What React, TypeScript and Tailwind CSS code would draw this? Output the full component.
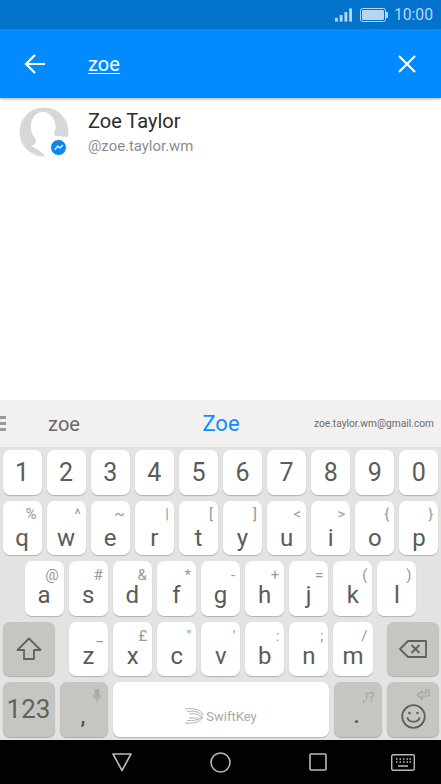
import React from "react";

const Key: React.FC<{ label: string; alt: string; labelTop?: string; altTop?: string }> = ({
  label,
  alt,
  labelTop = "top-[23px]",
  altTop = "top-[2px]",
}) => (
  <div className="relative flex-1 basis-0 h-full rounded-[7px] bg-white shadow-[0_1px_1px_rgba(0,0,0,0.22)]">
    <span className={`absolute right-[5px] ${altTop} text-[15px] leading-[22px] text-[#989895]`}>{alt}</span>
    <span className={`absolute inset-x-0 ${labelTop} text-center text-[24px] leading-[28px] text-[#5a5a57]`}>{label}</span>
  </div>
);

const Row: React.FC<{ keys: [string, string][]; labelTop?: string; altTop?: string }> = ({ keys, labelTop, altTop }) => (
  <>
    {keys.map(([label, alt]) => (
      <Key key={label} label={label} alt={alt} labelTop={labelTop} altTop={altTop} />
    ))}
  </>
);

const topRow: [string, string][] = [
  ["q", "%"], ["w", "^"], ["e", "~"], ["r", "|"], ["t", "["],
  ["y", "]"], ["u", "<"], ["i", ">"], ["o", "{"], ["p", "}"],
];
const midRow: [string, string][] = [
  ["a", "@"], ["s", "#"], ["d", "&"], ["f", "*"], ["g", "-"],
  ["h", "+"], ["j", "="], ["k", "("], ["l", ")"],
];
const lowRow: [string, string][] = [
  ["z", "_"], ["x", "£"], ["c", "\""], ["v", "'"], ["b", ":"], ["n", ";"], ["m", "/"],
];

const DarkKey: React.FC<{ className: string; children: React.ReactNode }> = ({ className, children }) => (
  <div className={`relative h-full shrink-0 rounded-[7px] bg-[#c5c5c2] shadow-[0_1px_1px_rgba(0,0,0,0.25)] ${className}`}>
    {children}
  </div>
);

export default function App() {
  return (
    <div className="w-[441px] h-[784px] overflow-hidden flex flex-col bg-white opacity-[0.99] font-['Roboto',sans-serif]">
      {/* status bar */}
      <div className="h-[29px] shrink-0 bg-[#0072cc] flex items-center justify-end pr-[8px] text-[#b5d6f2]">
        <svg width="17" height="14" viewBox="0 0 18 14" className="mr-[8px]" fill="currentColor">
          <rect x="0" y="10" width="3" height="4" />
          <rect x="5" y="7" width="3" height="7" />
          <rect x="10" y="4" width="3" height="10" />
          <rect x="15" y="0" width="3" height="14" />
        </svg>
        <svg width="28" height="14" viewBox="0 0 28 14" className="mr-[6px]">
          <rect x="0.5" y="0.5" width="25" height="13" rx="2" fill="none" stroke="currentColor" />
          <rect x="2" y="2" width="22" height="10" rx="1" fill="currentColor" />
          <rect x="26" y="4" width="2" height="6" fill="currentColor" />
        </svg>
        <span className="text-[15.7px] leading-none">10:00</span>
      </div>

      {/* search bar */}
      <div className="relative z-10 h-[69px] shrink-0 bg-[#0089ff] shadow-[0_1px_3px_rgba(0,0,0,0.35)] flex items-center text-white">
        <svg width="22" height="20" viewBox="0 0 22 20" className="ml-[24px]" fill="none" stroke="white" strokeWidth="2.2">
          <path d="M21 10H2M11 1l-9 9 9 9" />
        </svg>
        <span className="ml-[42px] text-[20px] leading-[24px] underline underline-offset-2 decoration-1">zoe</span>
        <svg width="18" height="18" viewBox="0 0 18 18" className="ml-auto mr-[25px]" fill="none" stroke="white" strokeWidth="2.2">
          <path d="M1 1l16 16M17 1L1 17" />
        </svg>
      </div>

      {/* results */}
      <div className="flex-1 flex items-start pt-[9px] pl-[19px]">
        <div className="relative w-[50px] h-[50px] shrink-0">
          <svg width="50" height="50" viewBox="0 0 50 50">
            <circle cx="25" cy="25" r="24.5" fill="#d6d7db" />
            <path d="M24 5c-7 0-12 6-12 14 0 5 1 9 4 12 1.500 2 1 5-1 7l-3 1c5 2 14 8 14 11h24V30L36 29c-1-2-1-3 0-5 1-3 1-5 0-8-2-7-6-11-12-11z" fill="#fff" />
            <path d="M0 42h6l6 8H0z" fill="#fff" />
          </svg>
          <div className="absolute left-[31px] top-[32px] w-[15px] h-[15px] rounded-full bg-[#0a84f5] border border-white box-content flex items-center justify-center">
            <svg width="10" height="7" viewBox="0 0 11 8" fill="none" stroke="white" strokeWidth="1.5">
              <path d="M0.800 6.500L4 2.500l2.500 2L10 1.200" />
            </svg>
          </div>
        </div>
        <div className="ml-[19px] flex flex-col">
          <span className="text-[20px] leading-[24px] text-[#2a2a2a] mt-[2px]">Zoe Taylor</span>
          <span className="text-[14.900px] leading-[18px] mt-[4px] text-[#8c8c8c]">@zoe.taylor.wm</span>
        </div>
      </div>

      {/* suggestions */}
      <div className="h-[47px] shrink-0 bg-[#f2f0f1] flex items-center relative">
        <svg width="6" height="15" viewBox="0 0 6 15" className="absolute left-0 top-[16px]" fill="#9a9a98">
          <rect y="0" width="6" height="3" />
          <rect y="6" width="6" height="3" />
          <rect y="12" width="6" height="3" />
        </svg>
        <span className="w-[128px] shrink-0 text-center text-[20px] text-[#666664]">zoe</span>
        <span className="w-[186px] shrink-0 text-center text-[22px] text-[#0a8cff]">Zoe</span>
        <span className="flex-1 pr-[8px] text-right text-[10.200px] text-[#6a6a68] whitespace-nowrap">zoe.taylor.wm@gmail.com</span>
      </div>

      {/* keyboard */}
      <div className="h-[293px] shrink-0 bg-[#e3e3e2] flex flex-col px-[2.5px] pt-[3px] gap-[6px]">
        <div className="h-[45px] flex gap-[5px]">
          {["1", "2", "3", "4", "5", "6", "7", "8", "9", "0"].map((n) => (
            <div key={n} className="flex-1 basis-0 rounded-[7px] bg-white shadow-[0_1px_1px_rgba(0,0,0,0.22)] flex items-center justify-center pt-[1px] text-[25px] text-[#5a5a57]">
              {n}
            </div>
          ))}
        </div>
        <div className="h-[54px] flex gap-[5px]">
          <Row keys={topRow} />
        </div>
        <div className="h-[54.500px] flex gap-[5px] px-[22px]">
          <Row keys={midRow} labelTop="top-[20px]" altTop="top-[3px]" />
        </div>
        <div className="h-[54.500px] flex gap-[5px]">
          <DarkKey className="w-[52px] flex items-center justify-center mr-[9.500px]">
            <svg width="26" height="24" viewBox="0 0 26 24" fill="none" stroke="#5f5f5c" strokeWidth="1.800" strokeLinejoin="round">
              <path d="M13 1.500L24.500 13H18v9H8v-9H1.500z" />
            </svg>
          </DarkKey>
          <div className="flex-1 flex gap-[5px] h-full">
            <Row keys={lowRow} labelTop="top-[20px]" altTop="top-[3px]" />
          </div>
          <DarkKey className="w-[52px] flex items-center justify-center ml-[9px]">
            <svg width="28" height="18" viewBox="0 0 28 18" fill="none" stroke="#5f5f5c" strokeWidth="1.800" strokeLinejoin="round">
              <path d="M9 1h18v16H9L1 9z" />
              <path d="M12.500 5l8 8M20.500 5l-8 8" />
            </svg>
          </DarkKey>
        </div>
        <div className="h-[54.500px] flex gap-[5px]">
          <DarkKey className="w-[52px] flex items-center justify-center">
            <span className="text-[26px] text-[#5f5f5c]">123</span>
          </DarkKey>
          <DarkKey className="w-[48px]">
            <svg width="10" height="14" viewBox="0 0 10 15" className="absolute right-[6px] top-[7px]" fill="none" stroke="#aaaaa7" strokeWidth="1.200">
              <rect x="3" y="0" width="4" height="9" rx="2" fill="#aaaaa7" />
              <path d="M1 6c0 6 8 6 8 0M5 11v4" />
            </svg>
            <span className="absolute left-[21px] top-[21px] text-[22px] leading-[28px] font-medium text-[#50504d]">,</span>
          </DarkKey>
          <div className="relative flex-1 h-full rounded-[7px] bg-white shadow-[0_1px_1px_rgba(0,0,0,0.22)] flex items-center justify-center pt-[14px]">
            <svg width="20" height="16" viewBox="0 0 20 16" fill="none" stroke="#b0b0b0" strokeWidth="1" className="mr-[2px]">
              <path d="M1 1c8-1 16 0 18 6M3 3.500c7-1 13 0 15 5M5 6c5-1 10 0 13 4M1 15c8 1 16-1 18-6M3 12.500c6 .5 11-.5 15-3M5 10h9" />
            </svg>
            <span className="text-[13px] leading-none text-[#a8a8a8]">SwiftKey</span>
          </div>
          <DarkKey className="w-[48px]">
            <span className="absolute right-[7px] top-[7px] text-[13px] leading-[16px] text-[#a3a3a0]">,!?</span>
            <span className="absolute left-[20px] top-[20px] text-[22px] leading-[28px] font-medium text-[#50504d]">.</span>
          </DarkKey>
          <DarkKey className="w-[52px]">
            <svg width="14" height="12" viewBox="0 0 14 12" className="absolute right-[9px] top-[7px]" fill="none" stroke="#a3a3a0" strokeWidth="1.200">
              <path d="M13 1v6H6V10L1 6l5-4v2h4V1z" />
            </svg>
            <svg width="25" height="25" viewBox="0 0 25 25" className="absolute left-[14px] top-[22px]" fill="none" stroke="#5f5f5c" strokeWidth="1.800">
              <circle cx="12.500" cy="12.500" r="11.300" />
              <path d="M6.500 14c1.500 5 10.500 5 12 0" strokeLinecap="round" />
              <circle cx="8.500" cy="9" r="1.300" fill="#5f5f5c" stroke="none" />
              <circle cx="16.500" cy="9" r="1.300" fill="#5f5f5c" stroke="none" />
            </svg>
          </DarkKey>
        </div>
      </div>

      {/* nav bar */}
      <div className="h-[44px] shrink-0 bg-black flex items-center text-[#b9b9b6]">
        <svg width="20" height="19" viewBox="0 0 20 19" className="ml-[112px]" fill="none" stroke="currentColor" strokeWidth="1.600" strokeLinejoin="round">
          <path d="M1 1h18L10 17.500z" />
        </svg>
        <svg width="21" height="21" viewBox="0 0 21 21" className="ml-[78px]" fill="none" stroke="currentColor" strokeWidth="1.600">
          <circle cx="10.500" cy="10.500" r="9.500" />
        </svg>
        <svg width="18" height="18" viewBox="0 0 18 18" className="ml-[78px]" fill="none" stroke="currentColor" strokeWidth="1.600">
          <rect x="1" y="1" width="16" height="16" rx="1" />
        </svg>
        <svg width="24" height="17" viewBox="0 0 24 17" className="ml-[64px]" fill="none" stroke="currentColor" strokeWidth="1.400">
          <rect x="0.700" y="0.700" width="22.600" height="15.600" rx="1.500" />
          <path d="M5 5h1.500M8.500 5H10M12 5h1.500M15.500 5H17M18.500 5H20M5 8h1.500M8.500 8H10M12 8h1.500M15.500 8H17M18.500 8H20M7 12h10" />
        </svg>
      </div>
    </div>
  );
}
